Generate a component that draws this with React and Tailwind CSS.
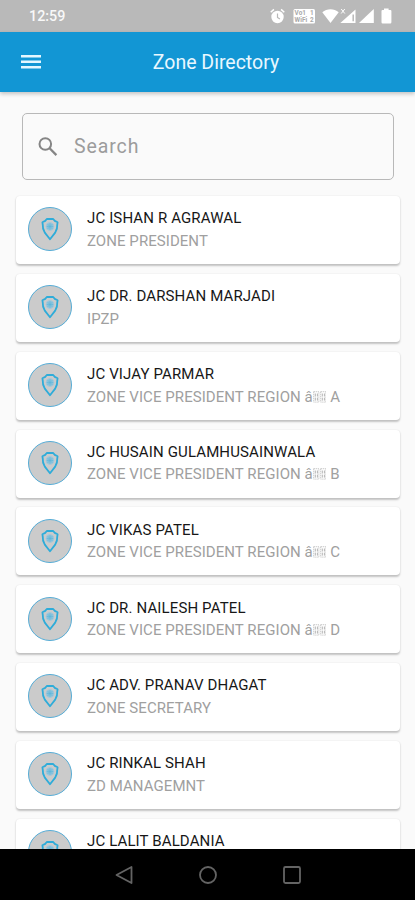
import React from "react";

const MEMBERS = [
  { name: "JC ISHAN R AGRAWAL", role: "ZONE PRESIDENT" },
  { name: "JC DR. DARSHAN MARJADI", role: "IPZP" },
  { name: "JC VIJAY PARMAR", role: "ZONE VICE PRESIDENT REGION", region: "A" },
  { name: "JC HUSAIN GULAMHUSAINWALA", role: "ZONE VICE PRESIDENT REGION", region: "B" },
  { name: "JC VIKAS PATEL", role: "ZONE VICE PRESIDENT REGION", region: "C" },
  { name: "JC DR. NAILESH PATEL", role: "ZONE VICE PRESIDENT REGION", region: "D" },
  { name: "JC ADV. PRANAV DHAGAT", role: "ZONE SECRETARY" },
  { name: "JC RINKAL SHAH", role: "ZD MANAGEMNT" },
  { name: "JC LALIT BALDANIA", role: "" },
];

function StatusIcons() {
  return (
    <svg width="122" height="20" viewBox="270 6 122 20" className="block" fill="#fff">
      {/* alarm */}
      <circle cx="277.5" cy="17" r="6.2" />
      <path d="M277.5 13.5v4l2.4 1.6" fill="none" stroke="#b9b9b9" strokeWidth="1.2" />
      <path d="M270.7 12.2l3.2-2.8M284.3 12.2l-3.2-2.8" stroke="#fff" strokeWidth="1.5" />
      {/* VoWiFi badge */}
      <rect x="293.5" y="9" width="21.5" height="14.5" rx="1.5" />
      <g fill="#a9a9a9" fontFamily="Roboto, sans-serif" fontSize="6.4" fontWeight="700">
        <text x="294.6" y="15.4">Vo1</text>
        <text x="294.6" y="22">WiFi</text>
        <text x="310" y="15.4">1</text>
        <text x="310" y="22">2</text>
      </g>
      {/* wifi */}
      <path d="M322.3 12.2c4.6-4.1 11.8-4.1 16.4 0L330.5 23z" />
      {/* first SIM */}
      <path d="M355.5 9.5V23H340.3z" />
      <path d="M353.2 14.5v6.8" stroke="#b9b9b9" strokeWidth="1.5" />
      <path d="M341.2 9l3.6 4.5M344.8 9l-3.6 4.5" stroke="#fff" strokeWidth="1" />
      {/* second SIM */}
      <path d="M373.8 9V23H359z" />
      {/* battery */}
      <path d="M384 8.5h4.6V10h1.8q1 0 1 1v11.2q0 1.2-1.2 1.2h-7.5q-1.2 0-1.2-1.2V11q0-1 1-1H384z" />
    </svg>
  );
}

function Emblem() {
  return (
    <div className="flex h-[44px] w-[44px] shrink-0 items-center justify-center rounded-full border border-[#55acd6] bg-[#cbcbcb]">
      <svg width="20" height="26" viewBox="0 0 20 26" fill="none" stroke="#2eacd9" strokeLinejoin="round">
        <path d="M6.8 3h6.4L14.8 4.9 17.6 6.2 17.2 9Q17.6 12.6 15.2 16.6L10 23.2 4.8 16.6Q2.4 12.6 2.8 9L2.4 6.2 5.2 4.9z" strokeWidth="1.8" />
        <circle cx="10" cy="10.5" r="3.9" fill="#8cc4dd" stroke="#a3c8da" strokeWidth="0.8" />
        <path d="M6.8 10.5h6.4M10 7.3v6.4M7.8 8.3l4.4 4.4M12.2 8.3l-4.4 4.4" stroke="#5cb6d8" strokeWidth="0.6" />
      </svg>
    </div>
  );
}

function MissingGlyph() {
  return (
    <svg width="6.8" height="12" viewBox="0 0 6.8 12" className="inline-block align-[-1px]" fill="none" stroke="#aaa">
      <rect x="0.7" y="0.7" width="5.2" height="10.4" strokeWidth="0.7" strokeDasharray="1.2 0.8" />
      <path d="M2.3 2.5v3M4.4 2.5v3M2.3 6.6v3M4.4 6.6v3" strokeWidth="0.9" />
    </svg>
  );
}

function MemberCard({ name, role, region }) {
  return (
    <li className="flex h-[68px] shrink-0 rounded-[4px] bg-white pt-[11.4px] pl-3 shadow-[0_1.5px_2px_rgba(0,0,0,0.22),0_0_2px_rgba(0,0,0,0.05)]">
      <Emblem />
      <div className="ml-[15px] whitespace-nowrap">
        <p className="text-[15px] leading-[22.5px] tracking-[0.13px] text-[#171717]">{name}</p>
        {role && (
          <p className="text-[15px] leading-[22.5px] tracking-[0.06px] text-[#a0a0a0]">
            {role}
            {region && (
              <>
                {" â"}
                <MissingGlyph />
                <MissingGlyph />
                {" " + region}
              </>
            )}
          </p>
        )}
      </div>
    </li>
  );
}

export default function App() {
  return (
    <div className="flex h-[900px] w-[415px] flex-col overflow-hidden bg-[#fafafa] font-['Roboto',sans-serif]">
      <div className="flex h-8 shrink-0 items-center justify-between bg-[#b9b9b9] pr-[23px] pl-[29px]">
        <span className="pt-px text-[14.3px] font-medium text-[#f8f8f8]">12:59</span>
        <StatusIcons />
      </div>
      <header className="z-10 grid h-[60px] shrink-0 grid-cols-[1fr_auto_1fr] items-center bg-[#1296d4] pl-[17px] shadow-[0_2px_4px_rgba(0,0,0,0.22)]">
        <svg width="20" height="16" viewBox="0 0 20 16" className="ml-[4px]" fill="#e4f7ff">
          <path d="M0 1.1h20v2.5H0zM0 6.5h20v2.5H0zM0 11.9h20v2.5H0z" />
        </svg>
        <h1 className="pt-px text-[19.5px] text-[#e9f8ff]">Zone Directory</h1>
      </header>
      <main className="flex min-h-0 flex-1 flex-col overflow-hidden pt-[21px] pr-[15px] pl-4">
        <div className="mx-[6px] flex h-[67px] shrink-0 items-center rounded-[5px] border-[1.5px] border-[#b8b8b8] pl-[14px]">
          <svg width="22" height="22" viewBox="0 0 22 22" fill="none" stroke="#858585" strokeWidth="2">
            <circle cx="8.3" cy="8" r="5.8" />
            <path d="M12.6 12.3l6.8 6.8" strokeWidth="2.3" />
          </svg>
          <span className="ml-[15px] text-[19.5px] tracking-[0.9px] text-[#9c9c9c]">Search</span>
        </div>
        <ul className="mt-[16px] flex flex-col gap-[9.85px]">
          {MEMBERS.map((m) => (
            <MemberCard key={m.name} {...m} />
          ))}
        </ul>
      </main>
      <nav className="z-10 flex h-[51px] shrink-0 items-center justify-center gap-[64px] bg-black">
        <svg width="20" height="20" viewBox="0 0 20 20" fill="none" stroke="#646464" strokeWidth="1.8" strokeLinejoin="round">
          <path d="M17.5 2v16L2.5 10z" />
        </svg>
        <svg width="20" height="20" viewBox="0 0 20 20" fill="none" stroke="#646464" strokeWidth="1.8">
          <circle cx="10" cy="10" r="8" />
        </svg>
        <svg width="20" height="20" viewBox="0 0 20 20" fill="none" stroke="#646464" strokeWidth="1.8">
          <rect x="2" y="2" width="16" height="16" rx="1.5" />
        </svg>
      </nav>
    </div>
  );
}
